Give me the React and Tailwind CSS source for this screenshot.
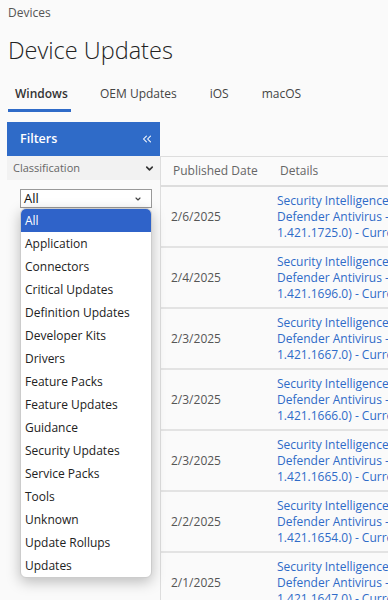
import React from "react";
import { ChevronDown, ChevronsLeft } from "lucide-react";

const rows = [
  { date: "2/6/2025", ver: "1.421.1725.0" },
  { date: "2/4/2025", ver: "1.421.1696.0" },
  { date: "2/3/2025", ver: "1.421.1667.0" },
  { date: "2/3/2025", ver: "1.421.1666.0" },
  { date: "2/3/2025", ver: "1.421.1665.0" },
  { date: "2/2/2025", ver: "1.421.1654.0" },
  { date: "2/1/2025", ver: "1.421.1647.0" },
];

const options = [
  "All",
  "Application",
  "Connectors",
  "Critical Updates",
  "Definition Updates",
  "Developer Kits",
  "Drivers",
  "Feature Packs",
  "Feature Updates",
  "Guidance",
  "Security Updates",
  "Service Packs",
  "Tools",
  "Unknown",
  "Update Rollups",
  "Updates",
];

const tabs = ["Windows", "OEM Updates", "iOS", "macOS"];

export default function App() {
  return (
    <div
      className="relative h-[600px] w-[388px] overflow-hidden bg-[#fafafa] text-[12px] text-[#333]"
      style={{ fontFamily: '"Open Sans", "Noto Sans", sans-serif' }}
    >
      {/* Header */}
      <div className="px-2 pt-[4px] text-[12px] leading-[18px] text-[#555]">Devices</div>
      <h1 className="mt-[12px] px-2 text-[23.5px] font-light leading-[32px] text-[#222]">
        Device Updates
      </h1>

      {/* Tabs */}
      <div className="mt-[14px] flex pl-2 text-[12px]">
        {tabs.map((t, i) => (
          <div
            key={t}
            className={`h-[32px] pt-[4px] leading-[20px] ${
              i === 0
                ? "w-[63px] border-b-[3px] border-[#2f6bc8] pl-[7px] font-semibold text-[#333]"
                : "border-b-[3px] border-transparent text-[#444]"
            } ${i === 1 ? "ml-[29px]" : ""} ${i === 2 ? "ml-[33px]" : ""} ${i === 3 ? "ml-[33px]" : ""}`}
          >
            {t}
          </div>
        ))}
      </div>

      <div className="mt-[10px] flex">
        {/* Filters panel */}
        <div className="ml-[7px] w-[153px] shrink-0">
          <div className="flex h-[34px] items-center justify-between bg-[#2f6bc8] pl-[13px] pr-[6px] text-white">
            <span className="text-[12.5px] font-semibold">Filters</span>
            <ChevronsLeft size={14} strokeWidth={1.8} />
          </div>
          <div className="flex h-[24px] items-center justify-between bg-[#f2f2f2] pl-[6px] pr-[5px] text-[11px] text-[#666]">
            <span>Classification</span>
            <ChevronDown size={11} strokeWidth={3.5} className="text-[#333]" />
          </div>
          <div className="ml-[13px] mt-[9px] flex h-[19px] w-[132px] items-center justify-between border border-[#999] bg-white pl-[3px] pr-[9px] text-[#111]">
            <span className="text-[13px] leading-none">All</span>
            <ChevronDown size={8} strokeWidth={3.5} className="text-[#444]" />
          </div>
        </div>

        {/* Table */}
        <div className="mt-[34px] flex-1 border-l border-t border-[#ddd]">
          <div className="flex h-[30px] items-center border-b-2 border-[#ddd] text-[#666]">
            <div className="w-[106px] shrink-0 pl-[12px] whitespace-nowrap">Published Date</div>
            <div className="pl-[13px]">Details</div>
          </div>
          {rows.map((r, i) => (
            <div key={i} className="flex h-[61px] items-center border-b-2 border-[#e3e3e3]">
              <div className="w-[106px] shrink-0 pl-[10px] text-[#555]">{r.date}</div>
              <div className="whitespace-nowrap pl-[10px] leading-[16px] text-[#2f6bc8]">
                <div>Security Intelligence Update for Microsoft</div>
                <div>Defender Antivirus - KB2267602 (Version</div>
                <div>{r.ver}) - Current Channel (Broad)</div>
              </div>
            </div>
          ))}
        </div>
      </div>

      {/* Dropdown list */}
      <div className="absolute left-[20px] top-[208px] w-[132px] overflow-hidden rounded-[6px] border border-[#ccc] bg-white shadow-[0_4px_14px_rgba(0,0,0,0.25)]">
        {options.map((o, i) => (
          <div
            key={o}
            className={`flex h-[23px] items-center pl-[4px] ${
              i === 0 ? "bg-[#2f63c9] text-white" : "text-[#222]"
            }`}
          >
            {o}
          </div>
        ))}
      </div>
    </div>
  );
}
